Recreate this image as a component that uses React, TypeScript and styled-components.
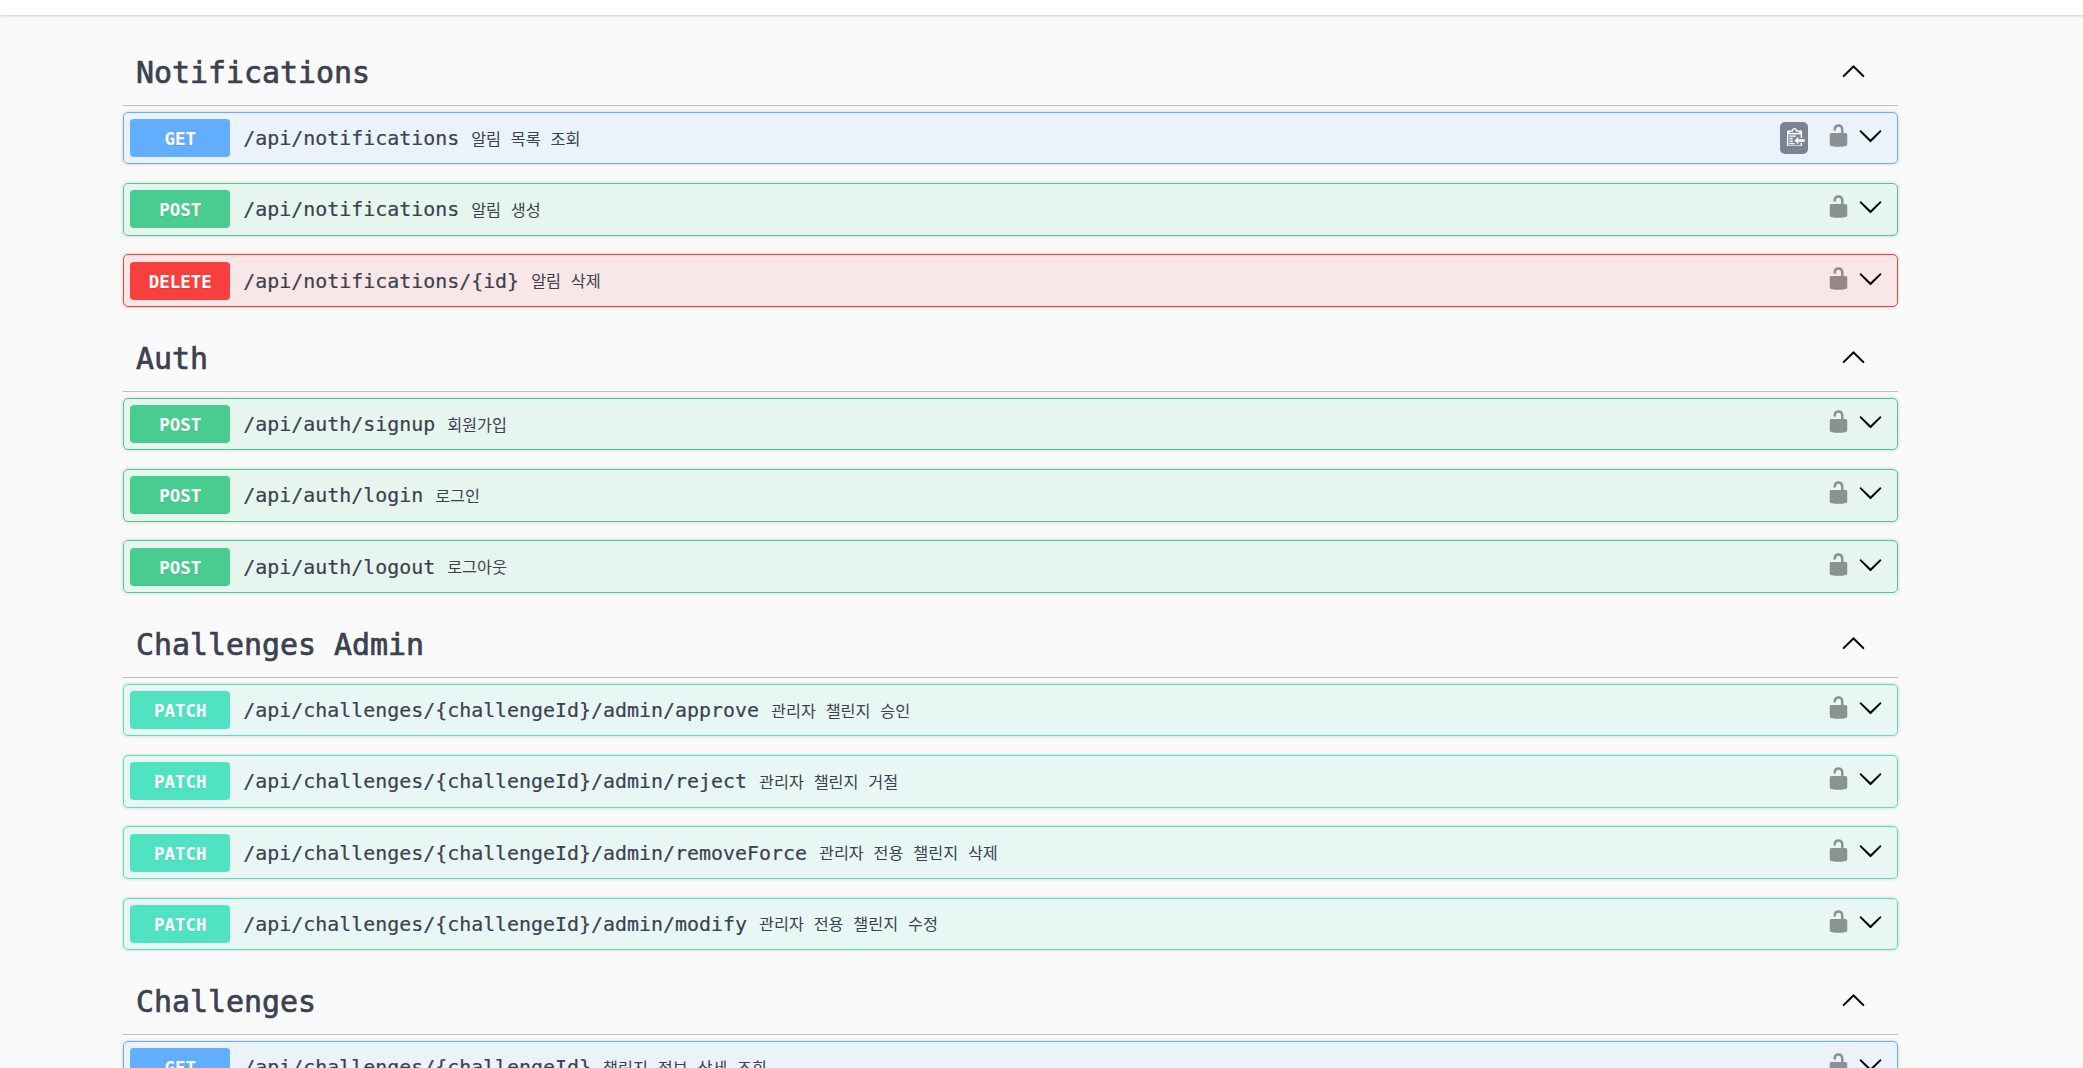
import React, { useState } from "react"
import styled, { createGlobalStyle } from 'styled-components'

type Method = "GET" | "POST" | "DELETE" | "PATCH"

type Operation = {
  method: Method
  path: string
  summary: string
  copyable?: boolean
}

type Tag = {
  name: string
  operations: Operation[]
}

const methodColors: Record<Method, string> = {
  GET: "97, 175, 254",
  POST: "73, 204, 144",
  DELETE: "249, 62, 62",
  PATCH: "80, 227, 194"
}

const tags: Tag[] = [
  {
    name: "Notifications",
    operations: [
      { method: "GET", path: "/api/notifications", summary: "알림 목록 조회", copyable: true },
      { method: "POST", path: "/api/notifications", summary: "알림 생성" },
      { method: "DELETE", path: "/api/notifications/{id}", summary: "알림 삭제" }
    ]
  },
  {
    name: "Auth",
    operations: [
      { method: "POST", path: "/api/auth/signup", summary: "회원가입" },
      { method: "POST", path: "/api/auth/login", summary: "로그인" },
      { method: "POST", path: "/api/auth/logout", summary: "로그아웃" }
    ]
  },
  {
    name: "Challenges Admin",
    operations: [
      { method: "PATCH", path: "/api/challenges/{challengeId}/admin/approve", summary: "관리자 챌린지 승인" },
      { method: "PATCH", path: "/api/challenges/{challengeId}/admin/reject", summary: "관리자 챌린지 거절" },
      { method: "PATCH", path: "/api/challenges/{challengeId}/admin/removeForce", summary: "관리자 전용 챌린지 삭제" },
      { method: "PATCH", path: "/api/challenges/{challengeId}/admin/modify", summary: "관리자 전용 챌린지 수정" }
    ]
  },
  {
    name: "Challenges",
    operations: [
      { method: "GET", path: "/api/challenges/{challengeId}", summary: "챌린지 정보 상세 조회" }
    ]
  }
]

const GlobalStyle = createGlobalStyle`
  * {
    box-sizing: border-box;
  }
  body {
    margin: 0;
    background: #fafafa;
    color: #3b4151;
    font-family: "DejaVu Sans Mono", "Noto Sans CJK KR", monospace;
  }
`;

const Page = styled.div`
  height: 1068px;
  overflow: hidden;
`;

const SchemeBar = styled.div`
  height: 15px;
  background: #fff;
  box-shadow: 0 1.25px 2.5px rgba(0, 0, 0, 0.2);
`;

const Wrapper = styled.main`
  width: 1775px;
  margin-left: 123px;
  padding-top: 24.55px;
`;

const TagHeader = styled.h3`
  display: flex;
  align-items: center;
  height: 66px;
  margin: 0 0 6.25px;
  padding: 0 32px 0 13px;
  border-bottom: 1px solid #bfc0c3;
  font-size: 29.9px;
  font-weight: 400;
  line-height: 1;
  cursor: pointer;
  -webkit-text-stroke: 0.7px #3b4151;
`;

const TagName = styled.span`
  flex: 1;
  padding-top: 2px;
`;

const Row = styled.div<{ $method: Method }>`
  display: flex;
  align-items: center;
  height: 52.5px;
  margin-bottom: 18.75px;
  padding: 6.25px;
  border: 1px solid rgb(${p => methodColors[p.$method]});
  border-radius: 5px;
  background: rgba(${p => methodColors[p.$method]}, 0.1);
  box-shadow: 0 0 3.75px rgba(0, 0, 0, 0.19);
  cursor: pointer;
`;

const Badge = styled.span<{ $method: Method }>`
  width: 100px;
  height: 38px;
  border-radius: 3.75px;
  background: rgb(${p => methodColors[p.$method]});
  color: #fff;
  font-size: 17.44px;
  font-weight: 700;
  line-height: 40px;
  text-align: center;
  text-shadow: 0 1.25px 0 rgba(0, 0, 0, 0.1);
`;

const Path = styled.span`
  padding: 2px 12px 0 13px;
  font-size: 19.93px;
  line-height: 28px;
  -webkit-text-stroke: 0.2px #3b4151;
`;

const Summary = styled.span`
  flex: 1;
  padding-top: 3px;
  font-size: 16.25px;
  line-height: 24px;
`;

const CopyButton = styled.button`
  display: flex;
  align-items: center;
  justify-content: center;
  width: 28px;
  height: 32px;
  margin-right: 18px;
  padding: 0 0 2px 3px;
  border: none;
  border-radius: 5px;
  background: #7d8293;
`;

const Icon = styled.svg`
  width: 25px;
  height: 25px;
  flex: none;
`;

const LockIcon = styled(Icon)`
  margin: 0 7px 4.9px 0;
  opacity: 0.4;
`;

const RowArrow = styled(Icon)`
  margin: 0 7.5px 5px 0;
  stroke: #000;
  stroke-width: 0.2;
`;

const TagArrow = styled(Icon)`
  margin-bottom: 4px;
  stroke: #000;
  stroke-width: 0.2;
`;

const ARROW_UP = "M17.418 14.908c.272.268.709.268.979 0s.271-.701 0-.969l-7.908-7.83c-.27-.268-.707-.268-.979 0l-7.908 7.83c-.27.268-.27.701 0 .969.271.268.709.268.979 0L10 7.767z"
const ARROW_DOWN = "M17.418 6.109c.272-.268.709-.268.979 0s.271.701 0 .969l-7.908 7.83c-.27.268-.707.268-.979 0l-7.908-7.83c-.27-.268-.27-.701 0-.969.271-.268.709-.268.979 0L10 13.25z"
const UNLOCKED = "M15.8 8H14V5.6C14 2.703 12.665 1 10 1 7.334 1 6 2.703 6 5.6V6h2v-.801C8 3.754 8.797 3 10 3c1.203 0 2 .754 2 2.199V8H4c-.553 0-1 .646-1 1.199V17c0 .549.428 1.139.951 1.307l1.197.387C5.672 18.861 6.55 19 7.1 19h5.8c.549 0 1.428-.139 1.951-.307l1.196-.387c.524-.167.953-.757.953-1.306V9.199C17 8.646 16.352 8 15.8 8z"
const CLIPBOARD = "M2 13h4v1H2v-1zm5-6H2v1h5V7zm2 3V8l-3 3 3 3v-2h5v-2H9zM4.5 9H2v1h2.5V9zM2 12h2.5v-1H2v1zm9 1h1v2c-.02.28-.11.52-.3.7-.19.18-.42.28-.7.3H1c-.55 0-1-.45-1-1V4c0-.55.45-1 1-1h3c0-1.11.89-2 2-2 1.11 0 2 .89 2 2h3c.55 0 1 .45 1 1v5h-1V6H1v9h10v-2zM2 5h8c0-.55-.45-1-1-1H8c-.55 0-1-.45-1-1s-.45-1-1-1-1 .45-1 1-.45 1-1 1H3c-.55 0-1 .45-1 1z"

const OperationRow = ({ method, path, summary, copyable }: Operation) => (
  <Row $method={method}>
    <Badge $method={method}>{method}</Badge>
    <Path>{path}</Path>
    <Summary>{summary}</Summary>
    {copyable && (
      <CopyButton aria-label="copy">
        <svg width="17.5" height="18.75" viewBox="0 1 14 15">
          <path fill="#fff" stroke="#fff" strokeWidth="0.15" fillRule="evenodd" d={CLIPBOARD} />
        </svg>
      </CopyButton>
    )}
    <LockIcon viewBox="0 0 20 20"><path d={UNLOCKED} /></LockIcon>
    <RowArrow viewBox="0 0 20 20"><path d={ARROW_DOWN} /></RowArrow>
  </Row>
)

const TagSection = ({ name, operations }: Tag) => {
  const [open, setOpen] = useState<boolean>(true)
  return (
    <section>
      <TagHeader onClick={() => setOpen(!open)}>
        <TagName>{name}</TagName>
        <TagArrow viewBox="0 0 20 20"><path d={open ? ARROW_UP : ARROW_DOWN} /></TagArrow>
      </TagHeader>
      {open && operations.map(op => (
        <OperationRow key={op.method + op.path} {...op} />
      ))}
    </section>
  )
}

const App = () => {
  return (
    <>
      <GlobalStyle />
      <Page>
        <SchemeBar />
        <Wrapper>
          {tags.map(tag => (
            <TagSection key={tag.name} {...tag} />
          ))}
        </Wrapper>
      </Page>
    </>
  )
}

export default App
